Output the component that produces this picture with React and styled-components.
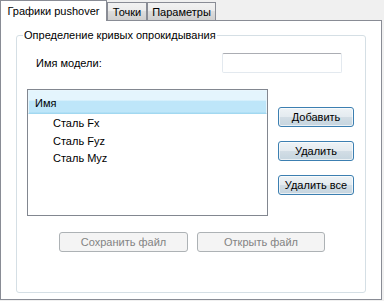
import React from 'react';
import styled, { createGlobalStyle } from 'styled-components';

const GlobalStyle = createGlobalStyle`
	html, body {
		margin: 0;
		padding: 0;
		background: #f0f0f0;
	}
	body {
		font-family: 'Liberation Sans', Arial, sans-serif;
		font-size: 11px;
		color: #000;
	}
`;

/************************/
/*        WINDOW        */
/************************/

const Window = styled.div`
	width: 384px;
	height: 301px;
	background: #f0f0f0;
	display: flex;
	flex-direction: column;
`;

const TabStrip = styled.div`
	display: flex;
	align-items: flex-end;
	height: 20px;
`;

const Tab = styled.div`
	box-sizing: border-box;
	height: ${(p) => (p.$active ? '21px' : '18px')};
	width: ${(p) => p.$width}px;
	margin-bottom: ${(p) => (p.$active ? '-1px' : '0')};
	border: 1px solid #898c95;
	border-bottom: none;
	background: ${(p) =>
		p.$active ? '#fff' : 'linear-gradient(#f2f2f2 0%, #ebebeb 50%, #dddddd 50%, #cfcfcf 100%)'};
	position: relative;
	z-index: ${(p) => (p.$active ? 2 : 1)};
	display: flex;
	align-items: center;
	justify-content: center;
	padding-bottom: ${(p) => (p.$active ? '1px' : '0')};
	white-space: nowrap;
`;

const Panel = styled.div`
	box-sizing: border-box;
	width: 382px;
	height: 280px;
	border: 1px solid #898c95;
	background: #fff;
	position: relative;
	z-index: 1;
`;

/************************/
/*       GROUP BOX      */
/************************/

const Group = styled.fieldset`
	box-sizing: border-box;
	margin: 8px 0 0 15px;
	padding: 0;
	width: 350px;
	height: 264px;
	border: 1px solid #d5dfe5;
	border-radius: 3px;
	display: flex;
	flex-direction: column;

	legend {
		margin-left: 6px;
		padding: 0 1px;
		line-height: 13px;
		font-size: 11px;
	}
`;

const ModelRow = styled.div`
	display: flex;
	justify-content: space-between;
	align-items: center;
	margin: 11px 23px 0 19px;
	height: 20px;
`;

const TextInput = styled.input`
	box-sizing: border-box;
	width: 120px;
	height: 20px;
	border: 1px solid #e3e9ef;
	border-top-color: #abadb3;
	border-radius: 2px;
	padding: 0 3px;
	outline: none;
	font: inherit;
`;

const Body = styled.div`
	display: flex;
	margin: 16px 0 0 10px;
	gap: 10px;
`;

const List = styled.div`
	box-sizing: border-box;
	width: 241px;
	height: 127px;
	border: 1px solid #828790;
	background: #fff;
`;

const ListHeader = styled.div`
	height: 24px;
	box-sizing: border-box;
	padding: 2px 0 0 6px;
	display: flex;
	align-items: center;
	background: linear-gradient(#e4f5fd 0%, #e4f5fd 42%, #bee6f9 45%, #bee6f9 94%, #a9dcf3 100%);
	border: 1px solid #e8f6fd;
	border-bottom-color: #a2d8f0;
`;

const ListItems = styled.ul`
	list-style: none;
	margin: 0;
	padding: 1px 0 0 25px;

	li {
		height: 17.5px;
		line-height: 17.5px;
	}
`;

const ButtonColumn = styled.div`
	display: flex;
	flex-direction: column;
	gap: 14px;
	padding-top: 18px;
`;

const Button = styled.button`
	box-sizing: border-box;
	width: ${(p) => p.$width || 76}px;
	height: 20px;
	padding: 0;
	font: inherit;
	color: #000;
	border: 1px solid #3c7fb1;
	border-radius: 3px;
	background: linear-gradient(#eef3f6 0%, #e4ebf0 48%, #d2dde5 52%, #c6d5df 100%);
	box-shadow: inset 0 0 0 1px rgba(255, 255, 255, 0.65);

	&:disabled {
		color: #838383;
		border-color: #adb2b5;
		background: #f4f4f4;
		box-shadow: none;
	}
`;

const FileRow = styled.div`
	display: flex;
	gap: 9px;
	margin: 16px 0 0 42px;
`;

export default function App() {
	return (
		<>
			<GlobalStyle />
			<Window>
				<TabStrip>
					<Tab $active $width={107}>Графики pushover</Tab>
					<Tab $width={40}>Точки</Tab>
					<Tab $width={69}>Параметры</Tab>
				</TabStrip>
				<Panel>
					<Group>
						<legend>Определение кривых опрокидывания</legend>
						<ModelRow>
							<span>Имя модели:</span>
							<TextInput />
						</ModelRow>
						<Body>
							<List>
								<ListHeader>Имя</ListHeader>
								<ListItems>
									<li>Сталь Fx</li>
									<li>Сталь Fyz</li>
									<li>Сталь Myz</li>
								</ListItems>
							</List>
							<ButtonColumn>
								<Button>Добавить</Button>
								<Button>Удалить</Button>
								<Button>Удалить все</Button>
							</ButtonColumn>
						</Body>
						<FileRow>
							<Button disabled $width={129}>
								Сохранить файл
							</Button>
							<Button disabled $width={128}>
								Открыть файл
							</Button>
						</FileRow>
					</Group>
				</Panel>
			</Window>
		</>
	);
}
